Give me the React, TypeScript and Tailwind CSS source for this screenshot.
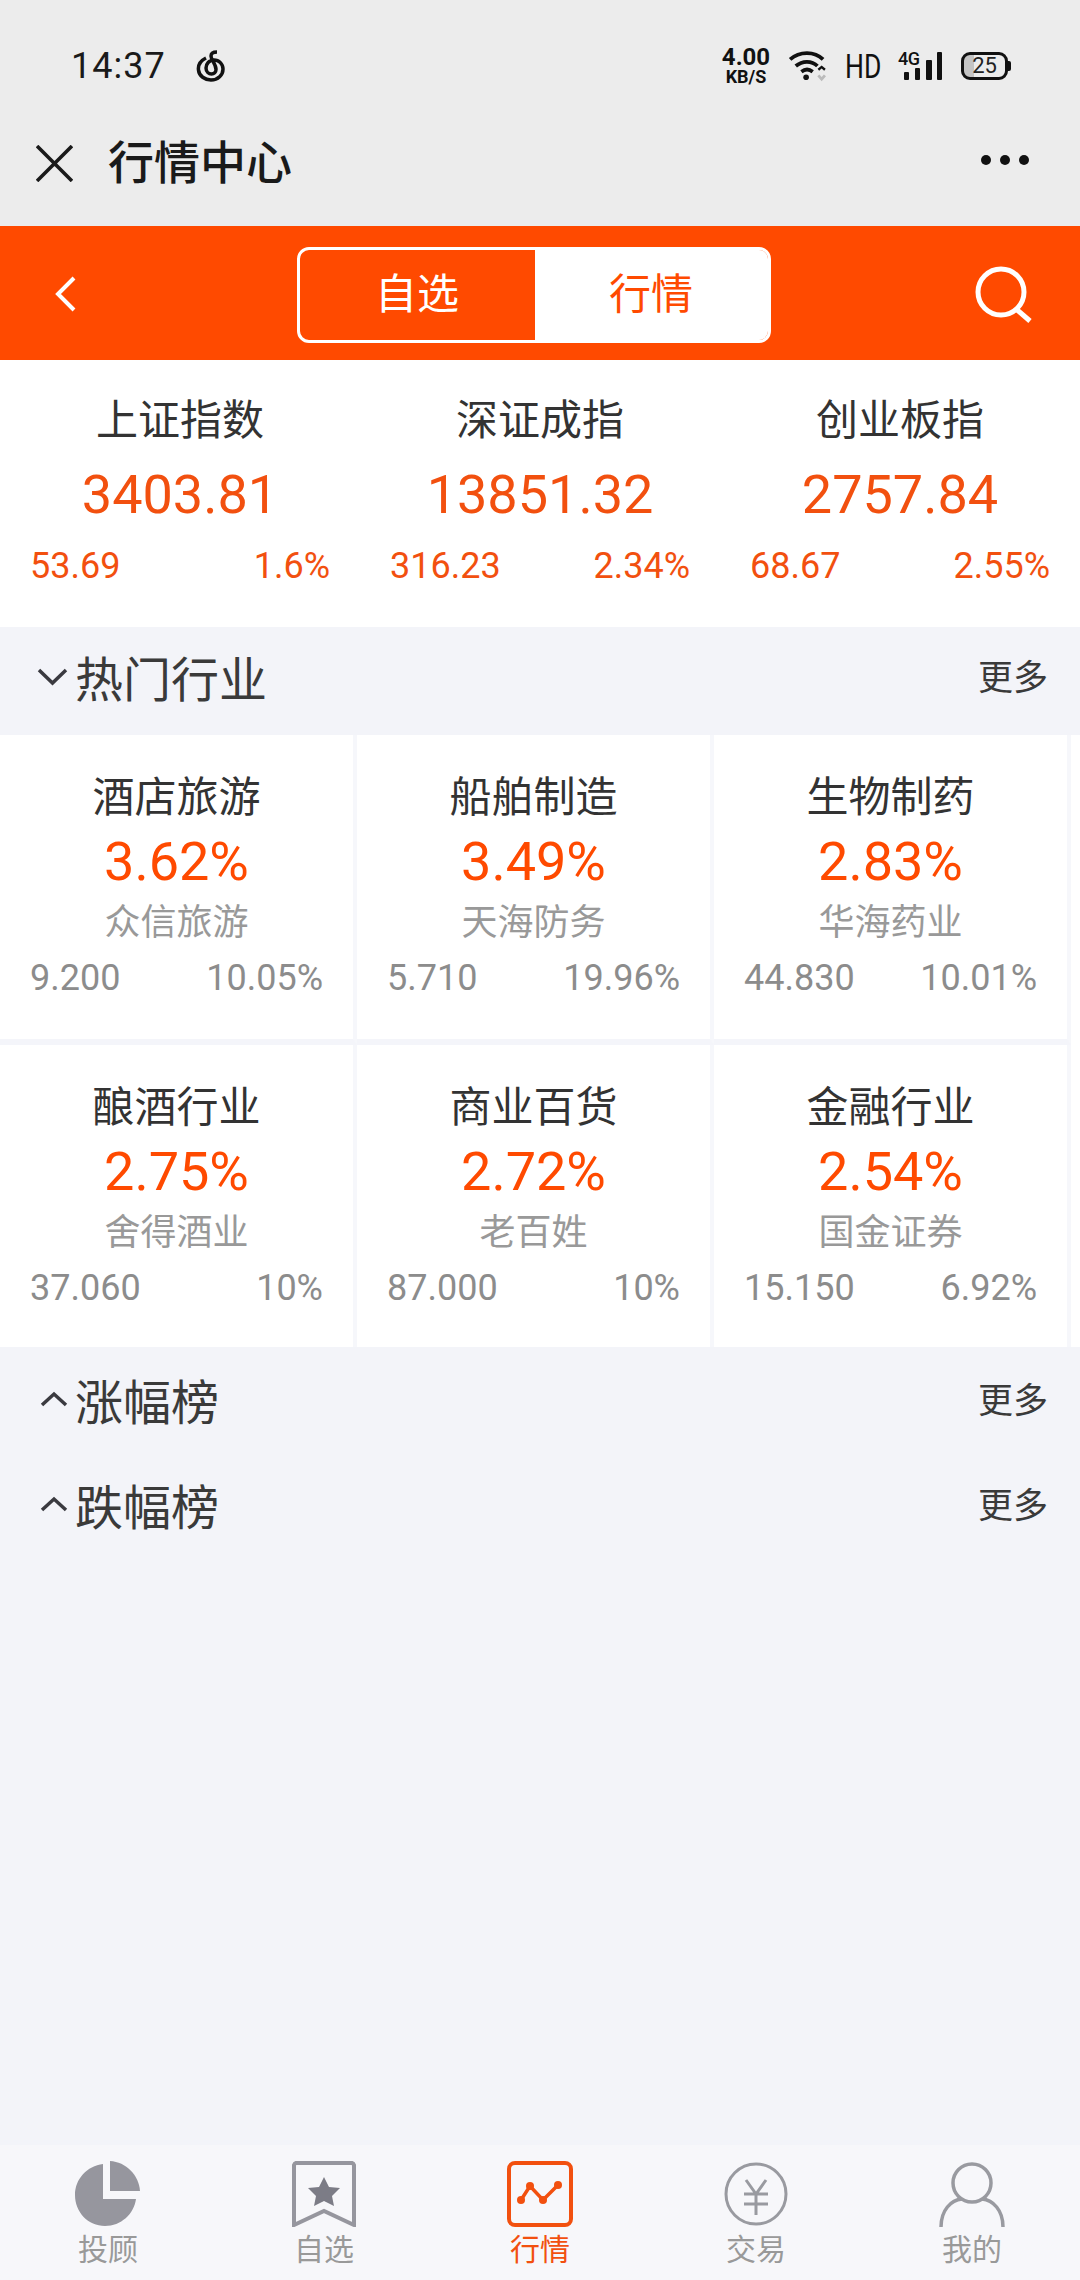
import React from "react";

const indices = [
  { n: "上证指数", v: "3403.81", a: "53.69", p: "1.6%" },
  { n: "深证成指", v: "13851.32", a: "316.23", p: "2.34%" },
  { n: "创业板指", v: "2757.84", a: "68.67", p: "2.55%" },
];
const cards = [
  ["酒店旅游", "3.62%", "众信旅游", "9.200", "10.05%"],
  ["船舶制造", "3.49%", "天海防务", "5.710", "19.96%"],
  ["生物制药", "2.83%", "华海药业", "44.830", "10.01%"],
  ["酿酒行业", "2.75%", "舍得酒业", "37.060", "10%"],
  ["商业百货", "2.72%", "老百姓", "87.000", "10%"],
  ["金融行业", "2.54%", "国金证券", "15.150", "6.92%"],
];

function Section({ title, open, h }: { title: string; open?: boolean; h: string }) {
  return (
    <div className={`flex items-center justify-between pl-[36px] pr-[32px] ${h}`}>
      <div className="flex items-center">
        <svg className="-mt-[8px]" width="32" height="20" viewBox="0 0 32 20" fill="none" stroke="#3a3a40" strokeWidth="3.5">
          {open ? <path d="M3 3l13.500 13L30 3" /> : <path d="M6 15L18 4l12 11" />}
        </svg>
        <span className="ml-[7px] text-[48px] leading-[56px] text-[#3a3a3a]">{title}</span>
      </div>
      <span className="-mt-[4px] text-[35px] leading-[40px] text-[#3a3a3a]">更多</span>
    </div>
  );
}

function Tab({ label, active, children }: { label: string; active?: boolean; children: React.ReactNode }) {
  return (
    <div className="flex w-[216px] flex-col items-center">
      <div className="h-[66px] w-[66px]">{children}</div>
      <span className={`mt-[5px] text-[30px] leading-[36px] ${active ? "text-[#f2500f]" : "text-[#999]"}`}>{label}</span>
    </div>
  );
}

export default function App() {
  return (
    <div className="flex h-[2280px] w-[1080px] flex-col overflow-hidden bg-[#f3f4f9] font-['Roboto','Noto_Sans_CJK_SC',sans-serif]">
      {/* system + title */}
      <div className="h-[226px] bg-[#ececec]">
        <div className="flex h-[134px] items-center justify-between pb-[2px] pl-[71px] pr-[69px]">
          <div className="flex items-center">
            <span className="text-[36px] tracking-[1px] text-[#1a1a1a]">14:37</span>
            <svg className="ml-[30px]" width="30" height="34" viewBox="0 0 30 34" fill="none" stroke="#111" strokeWidth="3.5">
              <path d="M10 9C4 12 2 17 2.500 21C3 27 9 31 15 31C22 31 27 26 27 20C27 15 23 11 18 11C13 11 10 15 10 19C10 23 13 25 15.500 25C18 25 20 23 20 20.500C20 15 15 11 15 7C15 4 18 3 21 3" />
            </svg>
          </div>
          <div className="flex items-center">
            <div className="flex w-[48px] flex-col items-center font-bold text-[#111]">
              <span className="text-[24px] leading-[22px]">4.00</span>
              <span className="whitespace-nowrap text-[18px] leading-[18px]">KB/S</span>
            </div>
            <svg className="ml-[18px]" width="40" height="32" viewBox="0 0 42 34" fill="none" stroke="#111" strokeWidth="4">
              <path d="M2 10c10-9 26-9 35 0" />
              <path d="M8 17c7-6 17-6 23 0" />
              <path d="M14 23c4-3 8-3 12 0" />
              <circle cx="19" cy="29" r="3" fill="#111" stroke="none" />
              <path d="M32 21l3.500-3 3.500 3" strokeWidth="2.500" />
              <path d="M32 27l3.500 4 3.500-4" stroke="#bbb" strokeWidth="3" />
            </svg>
            <div className="ml-[16px] flex w-[38px] justify-center">
              <span className="text-[34px] leading-[34px] text-[#111] [transform:scaleX(0.78)]">HD</span>
            </div>
            <div className="relative ml-[16px] h-[28px] w-[44px]">
              <span className="absolute left-0 top-0 text-[18px] font-medium leading-[14px] tracking-[-0.5px] text-[#111]">4G</span>
              <svg className="absolute left-0 top-0" width="44" height="28" viewBox="0 0 44 28" fill="#111">
                <rect x="6" y="20" width="5" height="8" rx="1" />
                <rect x="17" y="16" width="5" height="12" rx="1" />
                <rect x="28" y="8" width="6" height="20" rx="1" />
                <rect x="39" y="0" width="5" height="28" rx="1" />
              </svg>
            </div>
            <div className="ml-[19px] flex items-center">
              <div className="flex h-[28px] w-[47px] items-center justify-center rounded-[9px] border-[3px] border-[#111] bg-[linear-gradient(90deg,#c4c4c4_25%,#ececec_25%)] text-[22px] leading-[22px] text-[#222]">
                25
              </div>
              <div className="h-[10px] w-[3px] rounded-r-[2px] bg-[#111]" />
            </div>
          </div>
        </div>
        <div className="flex h-[58px] items-center justify-between pl-[36px] pr-[51px]">
          <div className="flex items-center">
            <svg width="37" height="37" viewBox="0 0 36 36" stroke="#1a1a1a" strokeWidth="3.500">
              <path d="M1 1l34 34M35 1L1 35" />
            </svg>
            <span className="ml-[35px] text-[46px] font-medium leading-[54px] text-[#1a1a1a]">行情中心</span>
          </div>
          <div className="-mt-[6px] flex gap-[9px]">
            <div className="h-[10px] w-[10px] rounded-full bg-[#111]" />
            <div className="h-[10px] w-[10px] rounded-full bg-[#111]" />
            <div className="h-[10px] w-[10px] rounded-full bg-[#111]" />
          </div>
        </div>
      </div>

      {/* orange nav */}
      <div className="flex h-[134px] items-center justify-between bg-[#ff4a00] pl-[54px] pr-[46px]">
        <svg className="mt-[1px]" width="22" height="36" viewBox="0 0 22 36" fill="none" stroke="#fff" strokeWidth="4">
          <path d="M20 2L4 18l16 16" />
        </svg>
        <div className="ml-[17px] mt-[3px] flex h-[96px] w-[474px] overflow-hidden rounded-[12px] border-[3px] border-white">
          <div className="flex w-[235px] items-center justify-center text-[42px] text-white">自选</div>
          <div className="flex flex-1 items-center justify-center bg-white text-[42px] text-[#ff4a00]">行情</div>
        </div>
        <svg className="mt-[3px]" width="60" height="60" viewBox="0 0 60 60" fill="none" stroke="#fff" strokeWidth="5">
          <circle cx="27" cy="27" r="23" />
          <path d="M42 44l14 12" />
        </svg>
      </div>

      {/* indices */}
      <div className="flex h-[267px] bg-white pt-[34px]">
        {indices.map((x) => (
          <div key={x.n} className="flex w-[360px] flex-col px-[30px]">
            <div className="text-center text-[42px] leading-[54px] text-[#333]">{x.n}</div>
            <div className="mt-[15px] whitespace-nowrap text-center text-[54px] leading-[64px] text-[#f2500f]">{x.v}</div>
            <div className="mt-[19px] flex justify-between text-[36px] leading-[40px] text-[#f2500f]">
              <span>{x.a}</span>
              <span>{x.p}</span>
            </div>
          </div>
        ))}
      </div>

      <Section title="热门行业" open h="h-[108px]" />

      {/* cards */}
      <div className="grid grid-cols-[357px_357px_357px] bg-white pr-[9px]">
        {cards.map((c) => (
          <div
            key={c[0]}
            className="h-[302px] border-r-[4px] border-[#f6f7fb] pl-[30px] pr-[30px] pt-[36px] [&:nth-child(-n+3)]:h-[310px] [&:nth-child(-n+3)]:border-b-[6px] [&:nth-child(-n+3)]:border-b-[#f4f5fa]"
          >
            <div className="text-center text-[42px] leading-[54px] text-[#333]">{c[0]}</div>
            <div className="mt-[7px] text-center text-[54px] leading-[60px] text-[#ff4a00]">{c[1]}</div>
            <div className="mt-[7px] text-center text-[36px] leading-[48px] text-[#999]">{c[2]}</div>
            <div className="mt-[9px] flex justify-between text-[36px] leading-[44px] text-[#8c8c8c]">
              <span>{c[3]}</span>
              <span>{c[4]}</span>
            </div>
          </div>
        ))}
      </div>

      <Section title="涨幅榜" h="h-[105px] pt-[8px]" />
      <Section title="跌幅榜" h="h-[105px] pt-[8px]" />

      <div className="flex-1" />

      {/* bottom tabs */}
      <div className="flex h-[135px] bg-[#f7f7fa] pt-[16px]">
        <Tab label="投顾">
          <svg width="66" height="66" viewBox="0 0 66 66" fill="#96969e">
            <path d="M28 3v35h33c-2 15-15 27-31 27C13 65 0 51 0 34 0 18 12 5 28 3z" />
            <path d="M35 0c16 1 29 14 30 30H35z" />
          </svg>
        </Tab>
        <Tab label="自选">
          <svg width="66" height="66" viewBox="0 0 66 66" fill="none" stroke="#96969e" strokeWidth="4">
            <path d="M5 2h56a3 3 0 0 1 2 2v60L33 50 3 64V4a3 3 0 0 1 2-2z" />
            <path d="M33 16l5 10 11 1-8 8 2 10-10-5-10 5 2-10-8-8 11-1z" fill="#7c7c86" stroke="none" />
          </svg>
        </Tab>
        <Tab label="行情" active>
          <svg width="66" height="66" viewBox="0 0 66 66" fill="none" stroke="#f2500f" strokeWidth="4">
            <rect x="2" y="2" width="62" height="62" rx="6" />
            <path d="M14 39l9-14 13 14 15-15" strokeWidth="3.500" />
            <g fill="#f2500f" stroke="none">
              <circle cx="14" cy="39" r="4" />
              <circle cx="23" cy="25" r="4" />
              <circle cx="36" cy="39" r="4" />
              <circle cx="51" cy="24" r="4" />
            </g>
          </svg>
        </Tab>
        <Tab label="交易">
          <svg width="66" height="66" viewBox="0 0 66 66" fill="none" stroke="#999aa0" strokeWidth="3">
            <circle cx="33" cy="33" r="30" />
            <path d="M23 19l10 14 10-14M21 33h24M21 43h24M33 33v21" />
          </svg>
        </Tab>
        <Tab label="我的">
          <svg width="66" height="66" viewBox="0 0 66 66" fill="none" stroke="#999aa0" strokeWidth="3.500">
            <circle cx="33" cy="22" r="19" />
            <path d="M2 66c0-17 10-27 21-28M64 66c0-17-10-27-21-28" />
          </svg>
        </Tab>
      </div>
    </div>
  );
}
